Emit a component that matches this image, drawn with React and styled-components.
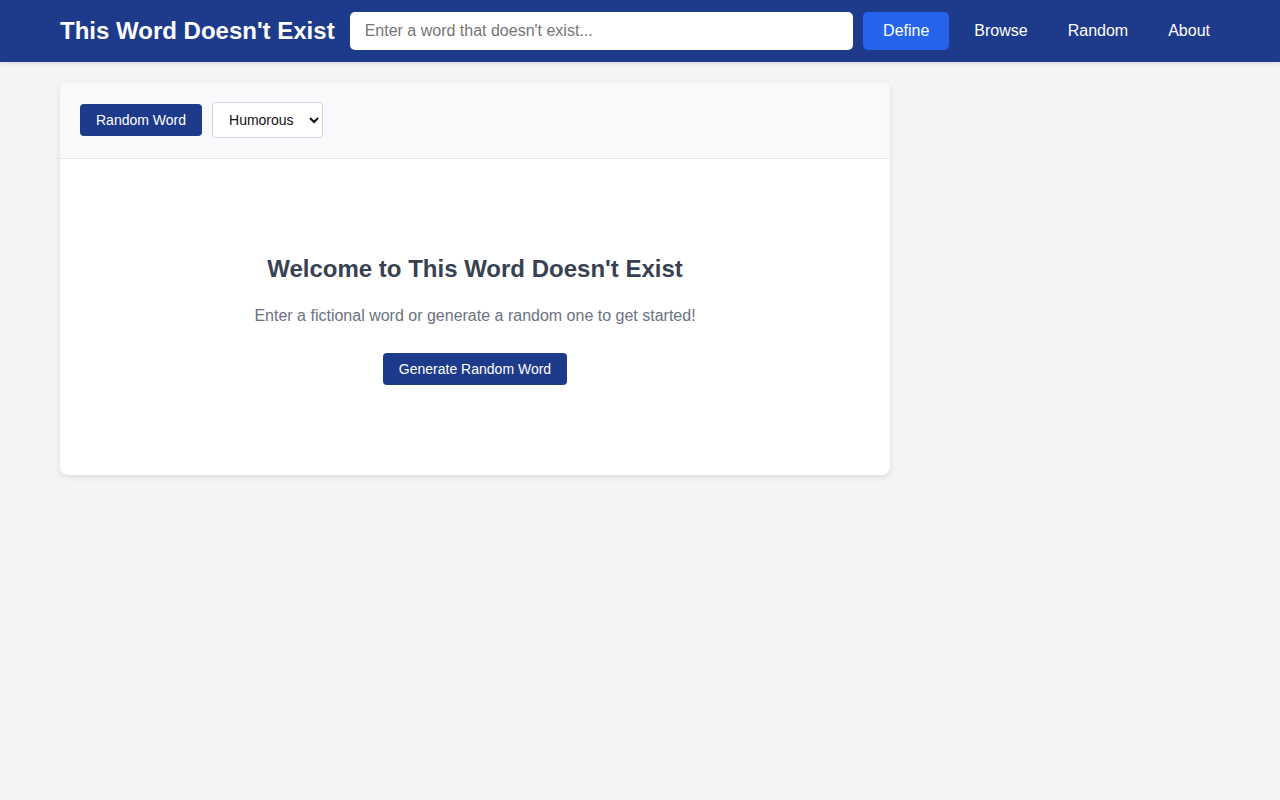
import React from "react";
import styled, { createGlobalStyle } from "styled-components";

const Global = createGlobalStyle`
  html, body { margin: 0; padding: 0; }
  body {
    background: #f4f4f4;
    font-family: "Liberation Sans", Arial, sans-serif;
    color: #333;
    min-height: 100vh;
  }
  * { box-sizing: border-box; }
`;

const Header = styled.header`
  background: #1e3a8a;
  height: 62px;
  display: flex;
  align-items: center;
  box-shadow: 0 2px 4px rgba(0,0,0,0.1);
`;

const HeaderInner = styled.div`
  display: flex;
  align-items: center;
  width: 100%;
  padding: 0 50px 0 60px;
`;

const Logo = styled.h1`
  margin: 0 15px 0 0;
  font-size: 24px;
  font-weight: 700;
  color: #fff;
  white-space: nowrap;
`;

const SearchInput = styled.input`
  flex: 1;
  height: 38px;
  border: none;
  border-radius: 5px;
  padding: 0 15px;
  font-family: inherit;
  font-size: 16px;
  color: #333;
  outline: none;
  &::placeholder { color: #757575; }
`;

const DefineButton = styled.button`
  margin-left: 10px;
  height: 38px;
  padding: 0 20px;
  border: none;
  border-radius: 5px;
  background: #2563eb;
  color: #fff;
  font-family: inherit;
  font-size: 16px;
  cursor: pointer;
`;

const Nav = styled.nav`
  display: flex;
  margin-left: 5px;
`;

const NavLink = styled.a`
  color: #fff;
  text-decoration: none;
  font-size: 16px;
  padding: 8px 20px;
`;

const Main = styled.main`
  padding: 20px 60px;
`;

const Card = styled.section`
  width: 830px;
  background: #fff;
  border-radius: 8px;
  box-shadow: 0 2px 6px rgba(0,0,0,0.1);
  overflow: hidden;
`;

const Toolbar = styled.div`
  display: flex;
  align-items: center;
  gap: 10px;
  padding: 20px;
  background: #f8f9fa;
  border-bottom: 1px solid #e5e7eb;
`;

const PrimaryButton = styled.button`
  height: 32px;
  padding: 0 16px;
  border: none;
  border-radius: 4px;
  background: #1e3a8a;
  color: #fff;
  font-family: inherit;
  font-size: 14px;
  cursor: pointer;
`;

const Select = styled.select`
  height: 36px;
  padding: 0 12px;
  border: 1px solid #d1d5db;
  border-radius: 4px;
  background: #fff;
  font-family: inherit;
  font-size: 14px;
  color: #111;
`;

const Welcome = styled.div`
  text-align: center;
  padding: 96px 20px 90px;
`;

const Title = styled.h2`
  margin: 0 0 21px;
  font-size: 24px;
  line-height: 28px;
  font-weight: 700;
  color: #374151;
`;

const Lead = styled.p`
  margin: 0 0 25px;
  font-size: 16px;
  line-height: 24px;
  color: #6b7280;
`;

export default function App() {
  return (
    <>
      <Global />
      <Header>
        <HeaderInner>
          <Logo>This Word Doesn't Exist</Logo>
          <SearchInput placeholder="Enter a word that doesn't exist..." />
          <DefineButton>Define</DefineButton>
          <Nav>
            <NavLink href="#">Browse</NavLink>
            <NavLink href="#">Random</NavLink>
            <NavLink href="#">About</NavLink>
          </Nav>
        </HeaderInner>
      </Header>
      <Main>
        <Card>
          <Toolbar>
            <PrimaryButton>Random Word</PrimaryButton>
            <Select defaultValue="humorous">
              <option value="humorous">Humorous</option>
              <option value="serious">Serious</option>
              <option value="scientific">Scientific</option>
            </Select>
          </Toolbar>
          <Welcome>
            <Title>Welcome to This Word Doesn't Exist</Title>
            <Lead>Enter a fictional word or generate a random one to get started!</Lead>
            <PrimaryButton>Generate Random Word</PrimaryButton>
          </Welcome>
        </Card>
      </Main>
    </>
  );
}
